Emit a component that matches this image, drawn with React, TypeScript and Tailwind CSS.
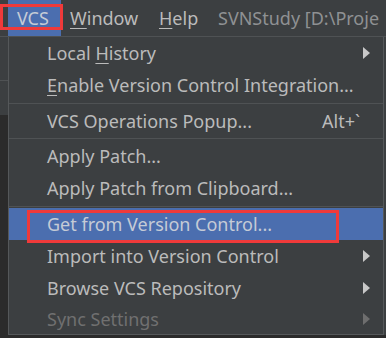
import { ReactNode } from "react";

type Item =
  | { kind: "sep"; h: string }
  | {
      kind: "item";
      label: ReactNode;
      shortcut?: string;
      submenu?: boolean;
      active?: boolean;
      disabled?: boolean;
      h?: string;
    };

const u = (c: string) => <span className="underline underline-offset-[3px] decoration-1">{c}</span>;

const items: Item[] = [
  { kind: "item", label: <>Local {u("H")}istory</>, submenu: true },
  { kind: "item", label: <>{u("E")}nable Version Control Integration...</> },
  { kind: "sep", h: "h-[4px]" },
  { kind: "item", label: "VCS Operations Popup...", shortcut: "Alt+`" },
  { kind: "sep", h: "h-[3px]" },
  { kind: "item", label: "Apply Patch..." },
  { kind: "item", label: "Apply Patch from Clipboard..." },
  { kind: "sep", h: "h-[4px]" },
  { kind: "item", label: "Get from Version Control...", active: true },
  { kind: "item", label: "Import into Version Control", submenu: true },
  { kind: "item", label: "Browse VCS Repository", submenu: true },
  { kind: "item", label: "Sync Settings", submenu: true, disabled: true, h: "h-[30px]" },
];

function Arrow({ dim }: { dim?: boolean }) {
  return (
    <svg width="7" height="12" viewBox="0 0 7 12" className="absolute left-[354px]">
      <polygon points="0,0 7,6 0,12" fill={dim ? "#6e6e6e" : "#c8c8c8"} />
    </svg>
  );
}

export default function App() {
  return (
    <div
      className="relative w-[386px] h-[338px] overflow-hidden bg-[#2b2b2b] text-[18px] text-[#bbbbbb]"
      style={{ fontFamily: '"Noto Sans", "Open Sans", sans-serif' }}
    >
      {/* menu bar */}
      <div className="flex h-[37px] items-center border-b border-[#4f5254] bg-[#3c3f41] pl-[8px]">
        <div className="flex h-full w-[53px] shrink-0 items-center bg-[#4b6eaf] pl-[9px] text-[#c5cbd6]">
          VC{u("S")}
        </div>
        <div className="flex h-full w-[89px] shrink-0 items-center pl-[9px]">{u("W")}indow</div>
        <div className="flex h-full w-[68px] shrink-0 items-center pl-[9px]">{u("H")}elp</div>
        <div className="whitespace-nowrap text-[#8f9193]">SVNStudy [D:\Proje</div>
      </div>

      <div className="flex">
        {/* left strip behind popup */}
        <div className="flex w-[8px] flex-col">
          <div className="h-[44px] border-b border-[#4f5254] bg-[#3c3f41]" />
          <div className="h-[34px] bg-[#3c3f41]" />
        </div>

        {/* popup */}
        <div className="w-[376px] border-x border-b border-[#55585a] bg-[#3c3f41]">
          {items.map((it, i) =>
            it.kind === "sep" ? (
              <div key={i} className={`flex items-center ${it.h}`}>
                <div className="h-px w-full bg-[#4f5254]" />
              </div>
            ) : (
              <div
                key={i}
                className={`relative flex items-center pl-[38px] ${it.h ?? "h-[32px]"} ${
                  it.active ? "bg-[#4b6eaf] text-[#c5cbd6]" : ""
                } ${it.disabled ? "text-[#707070]" : ""}`}
              >
                <span className="whitespace-nowrap">{it.label}</span>
                {it.shortcut && <span className="absolute left-[313px]">{it.shortcut}</span>}
                {it.submenu && <Arrow dim={it.disabled} />}
              </div>
            )
          )}
        </div>

        <div className="flex-1 bg-[#3c3f41]" />
      </div>

      {/* red highlight boxes */}
      <div className="absolute left-0 top-[4px] h-[26px] w-[63px] border-[3px] border-[#f03a3a]" />
      <div className="absolute left-[27px] top-[210px] h-[33px] w-[312px] border-[3px] border-[#f03a3a]" />
    </div>
  );
}
